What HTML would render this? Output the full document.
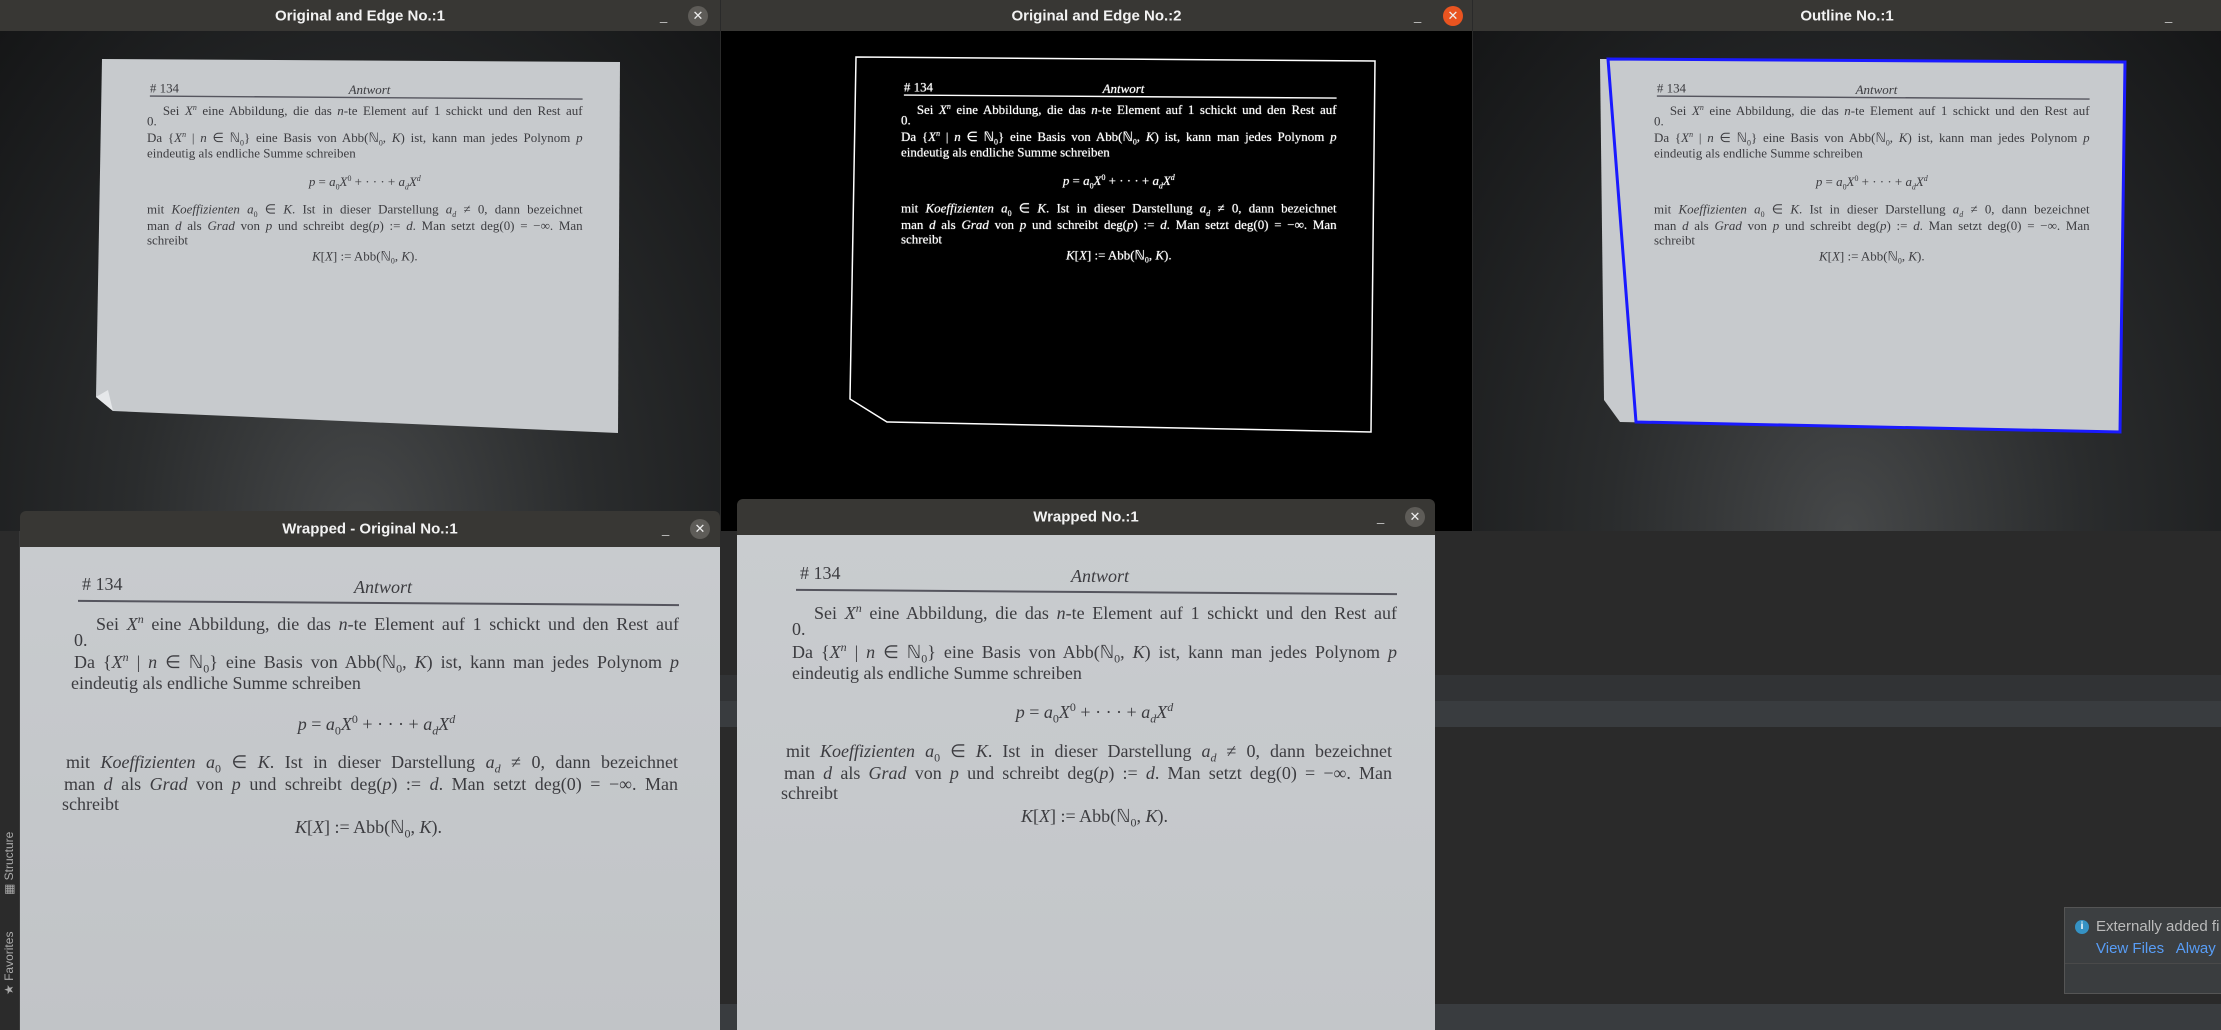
<!DOCTYPE html>
<html><head><meta charset="utf-8"><style>
*{margin:0;padding:0;box-sizing:border-box}
body{width:2221px;height:1030px;overflow:hidden;background:#2a2a2a;position:relative;font-family:"Liberation Sans",sans-serif}
.abs{position:absolute}
.tb{position:absolute;background:#383734;color:#f2f2f2;font-weight:bold;font-size:15px;text-align:center}
.tb .t{position:absolute;left:0;right:0;top:50%;transform:translateY(-50%)}
.tb .mn{position:absolute;top:50%;transform:translateY(-50%);color:#ccc;font-weight:normal;font-size:13px}
.tb .cl{position:absolute;top:50%;transform:translateY(-50%);width:20px;height:20px;border-radius:50%;background:#5e5c58;color:#eee;font-size:13px;line-height:20px;text-align:center;font-weight:normal}
.photo{background:radial-gradient(ellipse at 50% 100%,#464849 0%,#2a2c2d 45%,#151617 100%)}
.blk{position:absolute;width:605px;height:260px;font-family:"Liberation Serif",serif;font-size:18px;color:#3c3c40;transform-origin:0 0}
.blk div{position:absolute;white-space:nowrap;line-height:20px}
.blk sub,.blk sup{line-height:0}
.blk .j{left:0;width:605px;text-align:justify;text-align-last:justify}
.blk .c{left:0;width:605px;text-align:center}
.blk .rule{height:2px;background:#55555e;left:4px;width:601px;top:22px;transform:rotate(0.4deg)}
.edge .blk{color:#fff;text-shadow:0 0 1px #fff}
.edge .blk .rule{background:#fff}
</style></head><body>

<div class="abs photo" style="left:0;top:31px;width:720px;height:500px"></div>
<div class="abs" style="left:721px;top:31px;width:751px;height:500px;background:#000"></div>
<div class="abs photo" style="left:1473px;top:31px;width:748px;height:500px"></div>

<div class="tb" style="left:0;top:0;width:720px;height:31px"><span class="t">Original and Edge No.:1</span><span class="mn" style="left:660px">_</span><span class="cl" style="left:688px">✕</span></div>
<div class="tb" style="left:721px;top:0;width:751px;height:31px"><span class="t">Original and Edge No.:2</span><span class="mn" style="left:693px">_</span><span class="cl" style="left:722px;background:#e95420">✕</span></div>
<div class="tb" style="left:1473px;top:0;width:748px;height:31px"><span class="t">Outline No.:1</span><span class="mn" style="left:692px">_</span></div>

<svg class="abs" style="left:0;top:0" width="2221" height="531">
<polygon points="102,59 620,62 618,433 113,411 96,397" fill="#c7cacd"/>
<polygon points="96,397 113,411 108,390" fill="#e6e8ea"/>
<polygon points="856,57 1375,61 1371,432 887,422 850,399" fill="none" stroke="#fff" stroke-width="1.5"/>
<polygon points="1600,59 2125,62 2120,432 1620,422 1604,400" fill="#c7cacd"/>
<polygon points="1608,59 2125,62 2120,432 1636,422" fill="none" stroke="#1a1aff" stroke-width="3"/>
</svg>

<div class="blk" style="left:147px;top:81px;transform:scale(0.72)">
<div style="left:4px;top:0">#&nbsp;134</div><div style="left:280px;top:2px;font-style:italic">Antwort</div><div class="rule"></div>
<div class="j" style="top:31px;padding-left:22px">Sei <i>X<sup style="font-size:11px">n</sup></i> eine Abbildung, die das <i>n</i>-te Element auf 1 schickt und den Rest auf</div>
<div style="top:46px">0.</div>
<div class="j" style="top:69px">Da {<i>X<sup style="font-size:11px">n</sup></i> | <i>n</i> ∈ ℕ<sub style="font-size:11px">0</sub>} eine Basis von Abb(ℕ<sub style="font-size:11px">0</sub>, <i>K</i>) ist, kann man jedes Polynom <i>p</i></div>
<div style="top:90px">eindeutig als endliche Summe schreiben</div>
<div class="c" style="top:130px"><i>p</i> = <i>a</i><sub style="font-size:11px">0</sub><i>X</i><sup style="font-size:11px">0</sup> + · · · + <i>a<sub style="font-size:11px">d</sub>X<sup style="font-size:11px">d</sup></i></div>
<div class="j" style="top:168px">mit <i>Koeffizienten a</i><sub style="font-size:11px">0</sub> ∈ <i>K</i>. Ist in dieser Darstellung <i>a<sub style="font-size:11px">d</sub></i> ≠ 0, dann bezeichnet</div>
<div class="j" style="top:191px">man <i>d</i> als <i>Grad</i> von <i>p</i> und schreibt deg(<i>p</i>) := <i>d</i>. Man setzt deg(0) = −∞. Man</div>
<div style="top:211px">schreibt</div>
<div class="c" style="top:233px"><i>K</i>[<i>X</i>] := Abb(ℕ<sub style="font-size:11px">0</sub>, <i>K</i>).</div>
</div>

<div class="edge"><div class="blk" style="left:901px;top:80px;transform:scale(0.72)">
<div style="left:4px;top:0">#&nbsp;134</div><div style="left:280px;top:2px;font-style:italic">Antwort</div><div class="rule"></div>
<div class="j" style="top:31px;padding-left:22px">Sei <i>X<sup style="font-size:11px">n</sup></i> eine Abbildung, die das <i>n</i>-te Element auf 1 schickt und den Rest auf</div>
<div style="top:46px">0.</div>
<div class="j" style="top:69px">Da {<i>X<sup style="font-size:11px">n</sup></i> | <i>n</i> ∈ ℕ<sub style="font-size:11px">0</sub>} eine Basis von Abb(ℕ<sub style="font-size:11px">0</sub>, <i>K</i>) ist, kann man jedes Polynom <i>p</i></div>
<div style="top:90px">eindeutig als endliche Summe schreiben</div>
<div class="c" style="top:130px"><i>p</i> = <i>a</i><sub style="font-size:11px">0</sub><i>X</i><sup style="font-size:11px">0</sup> + · · · + <i>a<sub style="font-size:11px">d</sub>X<sup style="font-size:11px">d</sup></i></div>
<div class="j" style="top:168px">mit <i>Koeffizienten a</i><sub style="font-size:11px">0</sub> ∈ <i>K</i>. Ist in dieser Darstellung <i>a<sub style="font-size:11px">d</sub></i> ≠ 0, dann bezeichnet</div>
<div class="j" style="top:191px">man <i>d</i> als <i>Grad</i> von <i>p</i> und schreibt deg(<i>p</i>) := <i>d</i>. Man setzt deg(0) = −∞. Man</div>
<div style="top:211px">schreibt</div>
<div class="c" style="top:233px"><i>K</i>[<i>X</i>] := Abb(ℕ<sub style="font-size:11px">0</sub>, <i>K</i>).</div>
</div></div>

<div class="blk" style="left:1654px;top:81px;transform:scale(0.72)">
<div style="left:4px;top:0">#&nbsp;134</div><div style="left:280px;top:2px;font-style:italic">Antwort</div><div class="rule"></div>
<div class="j" style="top:31px;padding-left:22px">Sei <i>X<sup style="font-size:11px">n</sup></i> eine Abbildung, die das <i>n</i>-te Element auf 1 schickt und den Rest auf</div>
<div style="top:46px">0.</div>
<div class="j" style="top:69px">Da {<i>X<sup style="font-size:11px">n</sup></i> | <i>n</i> ∈ ℕ<sub style="font-size:11px">0</sub>} eine Basis von Abb(ℕ<sub style="font-size:11px">0</sub>, <i>K</i>) ist, kann man jedes Polynom <i>p</i></div>
<div style="top:90px">eindeutig als endliche Summe schreiben</div>
<div class="c" style="top:130px"><i>p</i> = <i>a</i><sub style="font-size:11px">0</sub><i>X</i><sup style="font-size:11px">0</sup> + · · · + <i>a<sub style="font-size:11px">d</sub>X<sup style="font-size:11px">d</sup></i></div>
<div class="j" style="top:168px">mit <i>Koeffizienten a</i><sub style="font-size:11px">0</sub> ∈ <i>K</i>. Ist in dieser Darstellung <i>a<sub style="font-size:11px">d</sub></i> ≠ 0, dann bezeichnet</div>
<div class="j" style="top:191px">man <i>d</i> als <i>Grad</i> von <i>p</i> und schreibt deg(<i>p</i>) := <i>d</i>. Man setzt deg(0) = −∞. Man</div>
<div style="top:211px">schreibt</div>
<div class="c" style="top:233px"><i>K</i>[<i>X</i>] := Abb(ℕ<sub style="font-size:11px">0</sub>, <i>K</i>).</div>
</div>

<div class="abs" style="left:0;top:675px;width:2221px;height:26px;background:#313335"></div>
<div class="abs" style="left:0;top:701px;width:2221px;height:26px;background:#393c3f"></div>
<div class="abs" style="left:0;top:1004px;width:2221px;height:26px;background:#393c3f"></div>
<div class="abs" style="left:0;top:531px;width:20px;height:499px;background:#2b2b2b;border-right:1px solid #3a3a3a"></div>
<div class="abs" style="left:2px;top:895px;width:16px;transform-origin:0 0;transform:rotate(-90deg);color:#aaa;font-size:12px;white-space:nowrap">&#9638; Structure</div>
<div class="abs" style="left:2px;top:995px;transform-origin:0 0;transform:rotate(-90deg);color:#aaa;font-size:12px;white-space:nowrap">★ Favorites</div>

<div class="abs" style="left:2064px;top:907px;width:170px;height:87px;background:#3c3f41;border:1px solid #555;border-right:none">
<div class="abs" style="left:0;right:0;bottom:0;height:30px;background:#3a3d3f;border-top:1px solid #4a4a4a"></div>
<div class="abs" style="left:10px;top:12px;width:14px;height:14px;border-radius:50%;background:#3592c4;color:#fff;font-size:10px;text-align:center;line-height:14px;font-weight:bold">i</div>
<div class="abs" style="left:31px;top:10px;color:#bbb;font-size:15px;white-space:nowrap">Externally added fi</div>
<div class="abs" style="left:31px;top:32px;color:#589df6;font-size:15px;white-space:nowrap">View Files &nbsp; Alway</div>
</div>

<div class="abs" style="left:20px;top:547px;width:700px;height:483px;background:linear-gradient(180deg,#c8cbce,#c1c4c7)"></div>
<div class="tb" style="left:20px;top:511px;width:700px;height:36px;border-radius:6px 6px 0 0"><span class="t">Wrapped - Original No.:1</span><span class="mn" style="left:642px">_</span><span class="cl" style="left:670px">✕</span></div>
<div class="blk" style="left:74px;top:574px;width:605px">
<div style="left:8px;top:0">#&nbsp;134</div><div style="left:280px;top:3px;font-style:italic">Antwort</div><div class="rule" style="top:28px"></div>
<div class="j" style="top:40px;padding-left:22px">Sei <i>X<sup style="font-size:12px">n</sup></i> eine Abbildung, die das <i>n</i>-te Element auf 1 schickt und den Rest auf</div>
<div style="top:56px">0.</div>
<div class="j" style="top:78px">Da {<i>X<sup style="font-size:12px">n</sup></i> | <i>n</i> ∈ ℕ<sub style="font-size:12px">0</sub>} eine Basis von Abb(ℕ<sub style="font-size:12px">0</sub>, <i>K</i>) ist, kann man jedes Polynom <i>p</i></div>
<div style="top:99px;left:-3px">eindeutig als endliche Summe schreiben</div>
<div class="c" style="top:140px"><i>p</i> = <i>a</i><sub style="font-size:12px">0</sub><i>X</i><sup style="font-size:12px">0</sup> + · · · + <i>a<sub style="font-size:12px">d</sub>X<sup style="font-size:12px">d</sup></i></div>
<div class="j" style="top:178px;left:-8px;width:612px">mit <i>Koeffizienten a</i><sub style="font-size:12px">0</sub> ∈ <i>K</i>. Ist in dieser Darstellung <i>a<sub style="font-size:12px">d</sub></i> ≠ 0, dann bezeichnet</div>
<div class="j" style="top:200px;left:-10px;width:614px">man <i>d</i> als <i>Grad</i> von <i>p</i> und schreibt deg(<i>p</i>) := <i>d</i>. Man setzt deg(0) = −∞. Man</div>
<div style="top:220px;left:-12px">schreibt</div>
<div class="c" style="top:243px;left:-8px"><i>K</i>[<i>X</i>] := Abb(ℕ<sub style="font-size:12px">0</sub>, <i>K</i>).</div>
</div>

<div class="abs" style="left:737px;top:535px;width:698px;height:495px;background:linear-gradient(180deg,#c9cccf,#c3c6c9)"></div>
<div class="tb" style="left:737px;top:499px;width:698px;height:36px;border-radius:6px 6px 0 0"><span class="t">Wrapped No.:1</span><span class="mn" style="left:640px">_</span><span class="cl" style="left:668px">✕</span></div>
<div class="blk" style="left:792px;top:563px">
<div style="left:8px;top:0">#&nbsp;134</div><div style="left:279px;top:3px;font-style:italic">Antwort</div><div class="rule" style="top:28px"></div>
<div class="j" style="top:40px;padding-left:22px">Sei <i>X<sup style="font-size:12px">n</sup></i> eine Abbildung, die das <i>n</i>-te Element auf 1 schickt und den Rest auf</div>
<div style="top:56px">0.</div>
<div class="j" style="top:79px">Da {<i>X<sup style="font-size:12px">n</sup></i> | <i>n</i> ∈ ℕ<sub style="font-size:12px">0</sub>} eine Basis von Abb(ℕ<sub style="font-size:12px">0</sub>, <i>K</i>) ist, kann man jedes Polynom <i>p</i></div>
<div style="top:100px">eindeutig als endliche Summe schreiben</div>
<div class="c" style="top:139px"><i>p</i> = <i>a</i><sub style="font-size:12px">0</sub><i>X</i><sup style="font-size:12px">0</sup> + · · · + <i>a<sub style="font-size:12px">d</sub>X<sup style="font-size:12px">d</sup></i></div>
<div class="j" style="top:178px;left:-6px;width:606px">mit <i>Koeffizienten a</i><sub style="font-size:12px">0</sub> ∈ <i>K</i>. Ist in dieser Darstellung <i>a<sub style="font-size:12px">d</sub></i> ≠ 0, dann bezeichnet</div>
<div class="j" style="top:200px;left:-8px;width:608px">man <i>d</i> als <i>Grad</i> von <i>p</i> und schreibt deg(<i>p</i>) := <i>d</i>. Man setzt deg(0) = −∞. Man</div>
<div style="top:220px;left:-11px">schreibt</div>
<div class="c" style="top:243px"><i>K</i>[<i>X</i>] := Abb(ℕ<sub style="font-size:12px">0</sub>, <i>K</i>).</div>
</div>

</body></html>
